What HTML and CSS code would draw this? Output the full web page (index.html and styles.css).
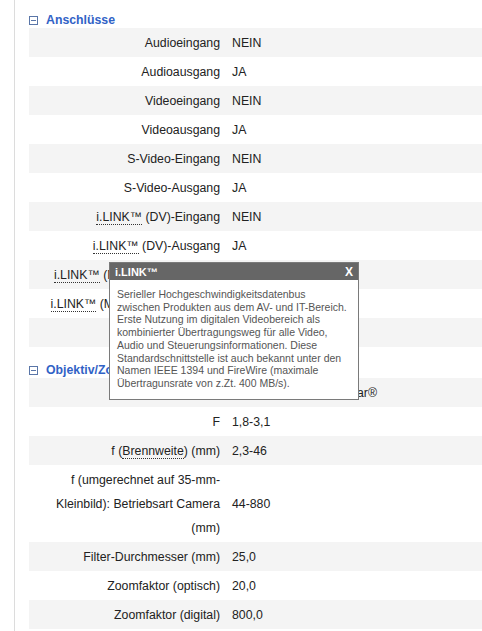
FILE: index.html
```html
<!DOCTYPE html>
<html lang="de">
<head>
<meta charset="utf-8">
<title>Technische Daten</title>
<link rel="stylesheet" href="styles.css">
</head>
<body>
<div class="page">
  <section class="sec">
    <h2 class="sec-head"><svg class="toggle" width="9" height="9" viewBox="0 0 9 9"><rect x="0.5" y="0.5" width="8" height="8" fill="none" stroke="#5a76a8"/><line x1="2" y1="4.5" x2="7" y2="4.5" stroke="#5a76a8"/></svg>Anschlüsse</h2>
    <div class="specs">
      <div class="row"><div class="lab">Audioeingang</div><div class="val">NEIN</div></div>
      <div class="row"><div class="lab">Audioausgang</div><div class="val">JA</div></div>
      <div class="row"><div class="lab">Videoeingang</div><div class="val">NEIN</div></div>
      <div class="row"><div class="lab">Videoausgang</div><div class="val">JA</div></div>
      <div class="row"><div class="lab">S-Video-Eingang</div><div class="val">NEIN</div></div>
      <div class="row"><div class="lab">S-Video-Ausgang</div><div class="val">JA</div></div>
      <div class="row"><div class="lab"><span class="term">i.LINK™</span> (DV)-Eingang</div><div class="val">NEIN</div></div>
      <div class="row"><div class="lab"><span class="term">i.LINK™</span> (DV)-Ausgang</div><div class="val">JA</div></div>
      <div class="row"><div class="lab"><span class="term">i.LINK™</span> (MICROMV)-Eingang</div><div class="val">NEIN</div></div>
      <div class="row"><div class="lab"><span class="term">i.LINK™</span> (MICROMV)-Ausgang</div><div class="val">NEIN</div></div>
      <div class="row"><div class="lab">USB-Anschluss</div><div class="val">JA</div></div>
    </div>
  </section>
  <section class="sec sec-next">
    <h2 class="sec-head"><svg class="toggle" width="9" height="9" viewBox="0 0 9 9"><rect x="0.5" y="0.5" width="8" height="8" fill="none" stroke="#5a76a8"/><line x1="2" y1="4.5" x2="7" y2="4.5" stroke="#5a76a8"/></svg>Objektiv/Zoom</h2>
    <div class="specs">
      <div class="row"><div class="lab">Objektiv</div><div class="val">Carl Zeiss® Vario-Tessar®</div></div>
      <div class="row"><div class="lab">F</div><div class="val">1,8-3,1</div></div>
      <div class="row"><div class="lab">f (<span class="term">Brennweite</span>) (mm)</div><div class="val">2,3-46</div></div>
      <div class="row"><div class="lab">f (umgerechnet auf 35-mm-Kleinbild): Betriebsart Camera (mm)</div><div class="val">44-880</div></div>
      <div class="row"><div class="lab">Filter-Durchmesser (mm)</div><div class="val">25,0</div></div>
      <div class="row"><div class="lab">Zoomfaktor (optisch)</div><div class="val">20,0</div></div>
      <div class="row"><div class="lab">Zoomfaktor (digital)</div><div class="val">800,0</div></div>
    </div>
  </section>

  <div class="tip">
    <div class="tip-head"><span class="tip-title">i.LINK™</span><span class="tip-close">X</span></div>
    <div class="tip-body">Serieller Hochgeschwindigkeitsdatenbus<br>zwischen Produkten aus dem AV- und IT-Bereich.<br>Erste Nutzung im digitalen Videobereich als<br>kombinierter Übertragungsweg für alle Video,<br>Audio und Steuerungsinformationen. Diese<br>Standardschnittstelle ist auch bekannt unter den<br>Namen IEEE 1394 und FireWire (maximale<br>Übertragunsrate von z.Zt. 400 MB/s).</div>
  </div>
</div>
</body>
</html>
```

FILE: styles.css
```css
html, body {
  margin: 0;
  padding: 0;
  background: #fff;
}

body {
  font-family: "Liberation Sans", Arial, sans-serif;
  font-size: 12.3px;
  color: #222;
  overflow: hidden;
}

.page {
  position: relative;
  margin-left: 14px;
  border-left: 1px solid #dcdcdc;
  padding-left: 14px;
  min-height: 631px;
}

.sec-head {
  display: flex;
  align-items: center;
  margin: 0;
  padding-top: 12px;
  height: 16px;
  line-height: 16px;
  font-size: 12.3px;
  font-weight: bold;
  color: #3162c6;
}

.sec-next {
  margin-top: 3px;
}

.toggle {
  display: block;
  margin-right: 8px;
  flex: none;
}

.specs {
  display: flex;
  flex-direction: column;
}

.row {
  display: grid;
  grid-template-columns: 195px 1fr;
  align-items: center;
}

.row:nth-child(odd) {
  background: #f4f4f4;
}

.lab, .val {
  padding: 3px 0 2px;
  line-height: 24px;
}

.lab {
  text-align: right;
  padding-left: 6px;
  padding-right: 4px;
}

.val {
  padding-left: 8px;
}

.term {
  border-bottom: 1px dotted #333;
}

.tip {
  position: absolute;
  left: 94px;
  top: 262px;
  width: 248px;
  border: 1px solid #7a7a7a;
  background: #fff;
  color: #555;
  font-size: 10.5px;
  overflow: hidden;
}

.tip-head {
  display: flex;
  justify-content: space-between;
  align-items: center;
  height: 17px;
  background: #666;
  color: #fff;
  padding: 0 5px;
  font-size: 11px;
  font-weight: bold;
}

.tip-close {
  font-size: 12px;
  font-weight: bold;
}

.tip-body {
  padding: 8px 7px 9px;
  line-height: 12.7px;
  white-space: nowrap;
}
```
